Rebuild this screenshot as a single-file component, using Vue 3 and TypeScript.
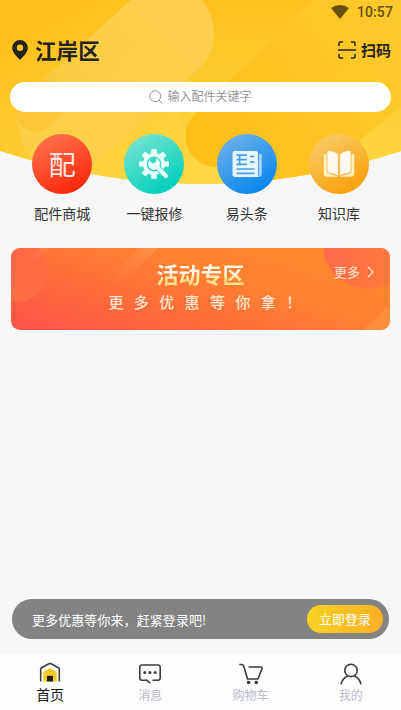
<script setup lang="ts">
import { ref } from 'vue'

interface Service { id: string; label: string }
interface Tab { id: string; label: string }

const services: Service[] = [
  { id: 'parts', label: '配件商城' },
  { id: 'repair', label: '一键报修' },
  { id: 'news', label: '易头条' },
  { id: 'library', label: '知识库' },
]
const tabs: Tab[] = [
  { id: 'home', label: '首页' },
  { id: 'message', label: '消息' },
  { id: 'cart', label: '购物车' },
  { id: 'mine', label: '我的' },
]
const active = ref<string>('home')
const teeth: number[] = [0, 45, 90, 135, 180, 225, 270, 315]
</script>

<template>
  <div class="screen">
    <svg class="backdrop" viewBox="0 0 401 190" aria-hidden="true">
      <defs>
        <linearGradient id="base" gradientUnits="userSpaceOnUse" x1="70" y1="0" x2="170" y2="184">
          <stop offset="0" stop-color="#ffbf1b" /><stop offset="1" stop-color="#fed945" />
        </linearGradient>
        <linearGradient id="topRight" gradientUnits="userSpaceOnUse" x1="200" y1="0" x2="200" y2="184">
          <stop offset="0" stop-color="#ffc11e" /><stop offset="1" stop-color="#fed945" />
        </linearGradient>
        <linearGradient id="pillLight" gradientUnits="userSpaceOnUse" x1="190" y1="20" x2="50" y2="150">
          <stop offset="0" stop-color="#fcd04e" /><stop offset="1" stop-color="#fdcf49" />
        </linearGradient>
        <linearGradient id="pillShade" gradientUnits="userSpaceOnUse" x1="30" y1="125" x2="140" y2="15">
          <stop offset="0" stop-color="#fec431" stop-opacity=".85" /><stop offset="1" stop-color="#fccd45" stop-opacity="0" />
        </linearGradient>
        <linearGradient id="pillDark" gradientUnits="userSpaceOnUse" x1="200" y1="150" x2="380" y2="10">
          <stop offset="0" stop-color="#ffbe18" /><stop offset="1" stop-color="#fec92c" />
        </linearGradient>
        <clipPath id="arch"><path d="M0 0H401V151Q201 217 0 151Z" /></clipPath>
      </defs>
      <g clip-path="url(#arch)">
        <rect width="401" height="190" fill="url(#base)" />
        <rect x="180" width="221" height="190" fill="url(#topRight)" />
        <path d="M131 0L22 99Q13 116 20 132Q22 146 32 159L50 175H83L202 66A51 51 0 0 0 202 0Z" fill="url(#pillLight)" />
        <path d="M131 0L18 103A20 20 0 0 0 46 129L170 18Z" fill="url(#pillShade)" />
        <path d="M314 0L196 113A31 31 0 0 0 213 167H240V190H300L401 106V0Z" fill="url(#pillDark)" />
        <path d="M401 0V106L315 179L225 180L401 12Z" fill="#ffcc32" opacity=".14" />
      </g>
    </svg>

    <header class="top">
      <div class="status">
        <svg class="wifi" viewBox="0 0 18 14"><path d="M0 3Q9-3 18 3L9 14Z" /></svg>
        <span>10:57</span>
      </div>
      <div class="location-row">
        <div class="location">
          <svg class="pin" viewBox="0 0 16 20"><path fill-rule="evenodd" d="M8 0A7.8 7.8 0 0 0 .2 7.8C.2 12.8 4.8 16.4 8 20C11.2 16.4 15.8 12.8 15.8 7.8A7.8 7.8 0 0 0 8 0ZM8 4.5A3.2 3.2 0 1 1 8 10.9A3.2 3.2 0 0 1 8 4.5Z" /></svg>
          <span>江岸区</span>
        </div>
        <div class="scan">
          <svg viewBox="0 0 18 18"><path d="M1 5V2.5Q1 1 2.5 1H5M13 1H15.5Q17 1 17 2.5V5M1 13V15.5Q1 17 2.5 17H5M13 17H15.5Q17 17 17 15.5V13M0 9H18" /></svg>
          <span>扫码</span>
        </div>
      </div>
      <div class="search">
        <svg viewBox="0 0 14 14"><circle cx="6.2" cy="6.2" r="5.5" /><path d="M10.2 10.2L13.4 13.4" /></svg>
        <span>输入配件关键字</span>
      </div>
    </header>

    <nav class="services">
      <a v-for="item in services" :key="item.id" class="service">
        <span class="disc" :class="item.id">
          <span v-if="item.id === 'parts'" class="mark">配</span>
          <svg v-else-if="item.id === 'repair'" viewBox="0 0 60 60">
            <g fill="#e6fffa">
              <rect v-for="angle in teeth" :key="angle" x="27.2" y="15" width="5.6" height="8" rx="1.2" :transform="`rotate(${angle} 30 30)`" />
              <circle cx="30" cy="30" r="11" />
            </g>
            <circle cx="30" cy="30" r="7.4" fill="#3fd7c4" />
            <path d="M31 31L43.5 43.5" stroke="#35d2c0" stroke-width="6" />
            <path d="M30.5 30.5L42 42" stroke="#e6fffa" stroke-width="4" stroke-linecap="round" />
            <path d="M25.2 26.5A6 6 0 1 0 32 24.2L32 28L29 30Z" fill="#e6fffa" />
          </svg>
          <svg v-else-if="item.id === 'news'" viewBox="0 0 60 60">
            <path d="M42.3 20H43.5Q44.8 20 44.8 21.3V39.5Q44.8 43 41 43H38Z" fill="#a5d5ff" />
            <path d="M17.5 17H39Q41 17 41 19V43H18Q15.5 43 15.5 40.5V19Q15.5 17 17.5 17Z" fill="#e7f5ff" />
            <path d="M41.4 19V42" stroke="#479bea" stroke-width=".9" />
            <path d="M19.5 21.2H30M19.5 25.7H30M19.5 30.3H30M22.6 21V30.5M33 22.5H37.5M33 28.2H37.5M19.5 35H37.5M19.5 39.3H37.5" stroke="#479fe8" stroke-width="1.7" fill="none" />
          </svg>
          <svg v-else viewBox="0 0 60 60">
            <path d="M15 20.5H18V39L28.5 42.5H18Q15 42.5 15 39.5ZM45 20.5H42V39L31.5 42.5H42Q45 42.5 45 39.5Z" fill="#fff0bf" stroke="#fff0bf" stroke-width=".5" />
            <path d="M29.4 42V20.5Q26 16.5 18 16.5V36.5Q18 39 22 39.5Q26.5 40 29.4 42ZM30.6 42V20.5Q34 16.5 42 16.5V36.5Q42 39 38 39.5Q33.5 40 30.6 42Z" fill="#fffaf0" stroke="#f4ae3b" stroke-width=".7" />
          </svg>
        </span>
        <span class="service-label">{{ item.label }}</span>
      </a>
    </nav>

    <section class="banner">
      <svg class="banner-art" viewBox="0 0 379 82" aria-hidden="true">
        <defs>
          <linearGradient id="bubbleL" x1="0" y1="0" x2="1" y2="1"><stop offset="0" stop-color="#ff6647" /><stop offset="1" stop-color="#ff7042" /></linearGradient>
          <linearGradient id="bubbleR" x1=".1" y1=".5" x2=".9" y2=".75"><stop offset="0" stop-color="#ff6c4c" /><stop offset="1" stop-color="#ff7b38" /></linearGradient>
          <linearGradient id="beam" x1="1" y1="0" x2="0" y2="1"><stop offset="0" stop-color="#ff9850" stop-opacity=".7" /><stop offset="1" stop-color="#ff8644" stop-opacity="0" /></linearGradient>
        </defs>
        <circle cx="7" cy="23" r="30.5" fill="url(#bubbleL)" />
        <path d="M30 0H38L20 18H13Z" fill="url(#beam)" opacity=".5" />
        <path d="M127 0H147L113 34Q104 36 102 27Z" fill="url(#beam)" />
        <circle cx="357" cy="-4" r="45" fill="url(#bubbleR)" />
        <path d="M379 57V82H352Z" fill="#ff9845" opacity=".6" />
      </svg>
      <div class="banner-copy">
        <strong>活动专区</strong>
        <span>更多优惠等你拿！</span>
      </div>
      <div class="more"><span>更多</span><svg viewBox="0 0 7 12"><path d="M.8 .7L6.2 6L.8 11.3" /></svg></div>
    </section>

    <div class="login-bar">
      <span>更多优惠等你来，赶紧登录吧!</span>
      <button type="button">立即登录</button>
    </div>

    <footer class="tabs">
      <a v-for="tab in tabs" :key="tab.id" class="tab" :class="{ active: active === tab.id }" @click="active = tab.id">
        <svg v-if="tab.id === 'home'" viewBox="0 0 24 24">
          <path d="M5.2 20.5V11.6Q5.2 10.8 5.9 10.4L11.2 7.4Q12 7 12.8 7.4L18.1 10.4Q18.8 10.8 18.8 11.6V20.5Z" fill="#f5cb28" stroke="none" />
          <path d="M2.7 20.5V8.4Q2.7 7.3 3.6 6.8L10.9 2.8Q12 2.2 13.1 2.8L20.4 6.8Q21.3 7.3 21.3 8.4V20.5" />
          <path d="M9 14.8H15V20.5H9Z" fill="#211f1c" stroke="none" />
        </svg>
        <svg v-else-if="tab.id === 'message'" viewBox="0 0 24 24">
          <path d="M7.5 19.2H4Q1.8 19.2 1.8 17V6.2Q1.8 4 4 4H20Q22.2 4 22.2 6.2V17Q22.2 19.2 20 19.2H14.5M7.5 19.2Q9 18.9 10 20.2Q11 21.4 12.5 21.7" />
          <g fill="#403b39" stroke="none"><circle cx="6.8" cy="11.5" r="1.5" /><circle cx="12" cy="11.5" r="1.5" /><circle cx="17.2" cy="11.5" r="1.5" /></g>
        </svg>
        <svg v-else-if="tab.id === 'cart'" viewBox="0 0 24 24">
          <path d="M.3 3.5H2.5Q4.2 3.5 4.7 5L8.5 18H19L23 7.5Q23.3 6 22 6H9.5" />
          <g fill="#403b39" stroke="none"><circle cx="9.6" cy="21.5" r="1.8" /><circle cx="17.3" cy="21.5" r="1.8" /></g>
        </svg>
        <svg v-else viewBox="0 0 24 24">
          <circle cx="12" cy="9.4" r="6.2" />
          <path d="M2 23.3Q3.2 17.5 8.8 15M22 23.3Q20.8 17.5 15.2 15" />
        </svg>
        <span>{{ tab.label }}</span>
      </a>
    </footer>
  </div>
</template>

<style>
body { margin: 0; background: #f7f7f7; }
</style>

<style scoped>
.screen { position: relative; display: flex; flex-direction: column; height: 710px; overflow: hidden; background: #f7f7f7; color: #25231e; font-family: "Noto Sans CJK SC", sans-serif; }
svg { display: block; flex: none; }
.backdrop { position: absolute; top: 0; left: 0; width: 401px; height: 190px; }
.top { position: relative; padding: 0 10px; }
.status { display: flex; align-items: center; justify-content: flex-end; gap: 8px; height: 24px; margin-right: -2px; font: 500 14px/24px Roboto, sans-serif; color: #695012; letter-spacing: .1px; }
.wifi { width: 18px; height: 14px; margin-top: -1px; fill: #695012; }
.location-row { display: flex; align-items: center; justify-content: space-between; height: 52px; padding-left: 2px; }
.location { display: flex; align-items: center; gap: 7px; font-size: 21.6px; font-weight: 700; line-height: 30px; }
.pin { width: 16px; height: 20px; fill: #25231e; }
.scan { display: flex; align-items: center; gap: 5px; font-size: 15px; font-weight: 700; line-height: 22px; }
.scan span { margin-top: -1px; }
.scan svg { width: 18px; height: 18px; margin-top: -1px; fill: none; stroke: #25231e; stroke-width: 1.5; }
.search { display: flex; align-items: center; justify-content: center; gap: 4px; height: 30px; margin-top: 6px; border-radius: 15px; background: #fff; color: #969696; font-size: 12px; line-height: 28px; }
.search svg { width: 14px; height: 14px; margin-top: -1px; fill: none; stroke: #969696; }
.search span { margin-top: -2px; }
.services { position: relative; display: grid; grid-template-columns: repeat(4, 92.3px); padding: 22px 0 0 16px; }
.service { display: flex; flex-direction: column; align-items: center; }
.disc { display: grid; place-items: center; width: 60px; height: 60px; border-radius: 50%; }
.disc svg { width: 60px; height: 60px; }
.parts { background: linear-gradient(155deg, #ff7650 5%, #fb260b 90%); }
.repair { background: linear-gradient(150deg, #75e5d1 8%, #00cebc 88%); }
.news { background: linear-gradient(150deg, #6eb1e9 8%, #0686ef 88%); }
.library { background: linear-gradient(150deg, #facb68 8%, #f8a009 88%); }
.mark { color: #ffe9e5; font-size: 27px; font-weight: 400; line-height: 60px; }
.service-label { margin-top: 8px; margin-bottom: 1px; font-size: 14px; line-height: 22px; color: #333; }
.banner { position: relative; display: flex; justify-content: center; height: 82px; margin: 23px 11px 0; overflow: hidden; border-radius: 9px; background: linear-gradient(17deg, #ff5349 0%, #ff8130 60%, #ff892a 100%); }
.banner-art { position: absolute; inset: 0; width: 379px; height: 82px; }
.banner-copy { position: relative; display: flex; flex-direction: column; align-items: center; padding-top: 10px; }
.banner-copy strong { font-size: 22px; line-height: 30px; background: linear-gradient(#fff9ed 48%, #ffe18a 75%); background-clip: text; color: transparent; }
.banner-copy span { margin-top: 2px; margin-left: 19px; font-size: 15px; font-weight: 500; line-height: 23px; letter-spacing: 10.4px; color: #ffe5d2; }
.more { position: absolute; top: 14px; right: 16px; display: flex; align-items: center; gap: 7px; color: #ffe4d5; font-size: 13px; line-height: 20px; }
.more svg { width: 7px; height: 12px; margin-top: -1px; fill: none; stroke: #ffe4d5; stroke-width: 1.2; }
.login-bar { display: flex; align-items: center; justify-content: space-between; box-sizing: border-box; height: 40px; margin: auto 12px 15px; padding: 0 6px 0 20px; border-radius: 20px; background: #838383; color: #fff; font-size: 13px; letter-spacing: .08px; }
.login-bar button { width: 76px; height: 28px; padding: 0; border: 0; border-radius: 14px; background: linear-gradient(100deg, #f8d322, #f9ae25); color: #fff; font: 13px/28px "Noto Sans CJK SC", sans-serif; }
.tabs { display: grid; grid-template-columns: repeat(4, 1fr); height: 56px; background: #fdfdfd; }
.tab { display: flex; flex-direction: column; align-items: center; padding-top: 7px; color: #babac8; font-size: 12px; }
.tab svg { width: 24px; height: 24px; fill: none; stroke: #403b39; stroke-width: 1.6; }
.tab span { line-height: 20px; }
.tab.active { color: #191919; font-size: 14px; }
.tab.active span { margin-top: -1px; }
</style>
